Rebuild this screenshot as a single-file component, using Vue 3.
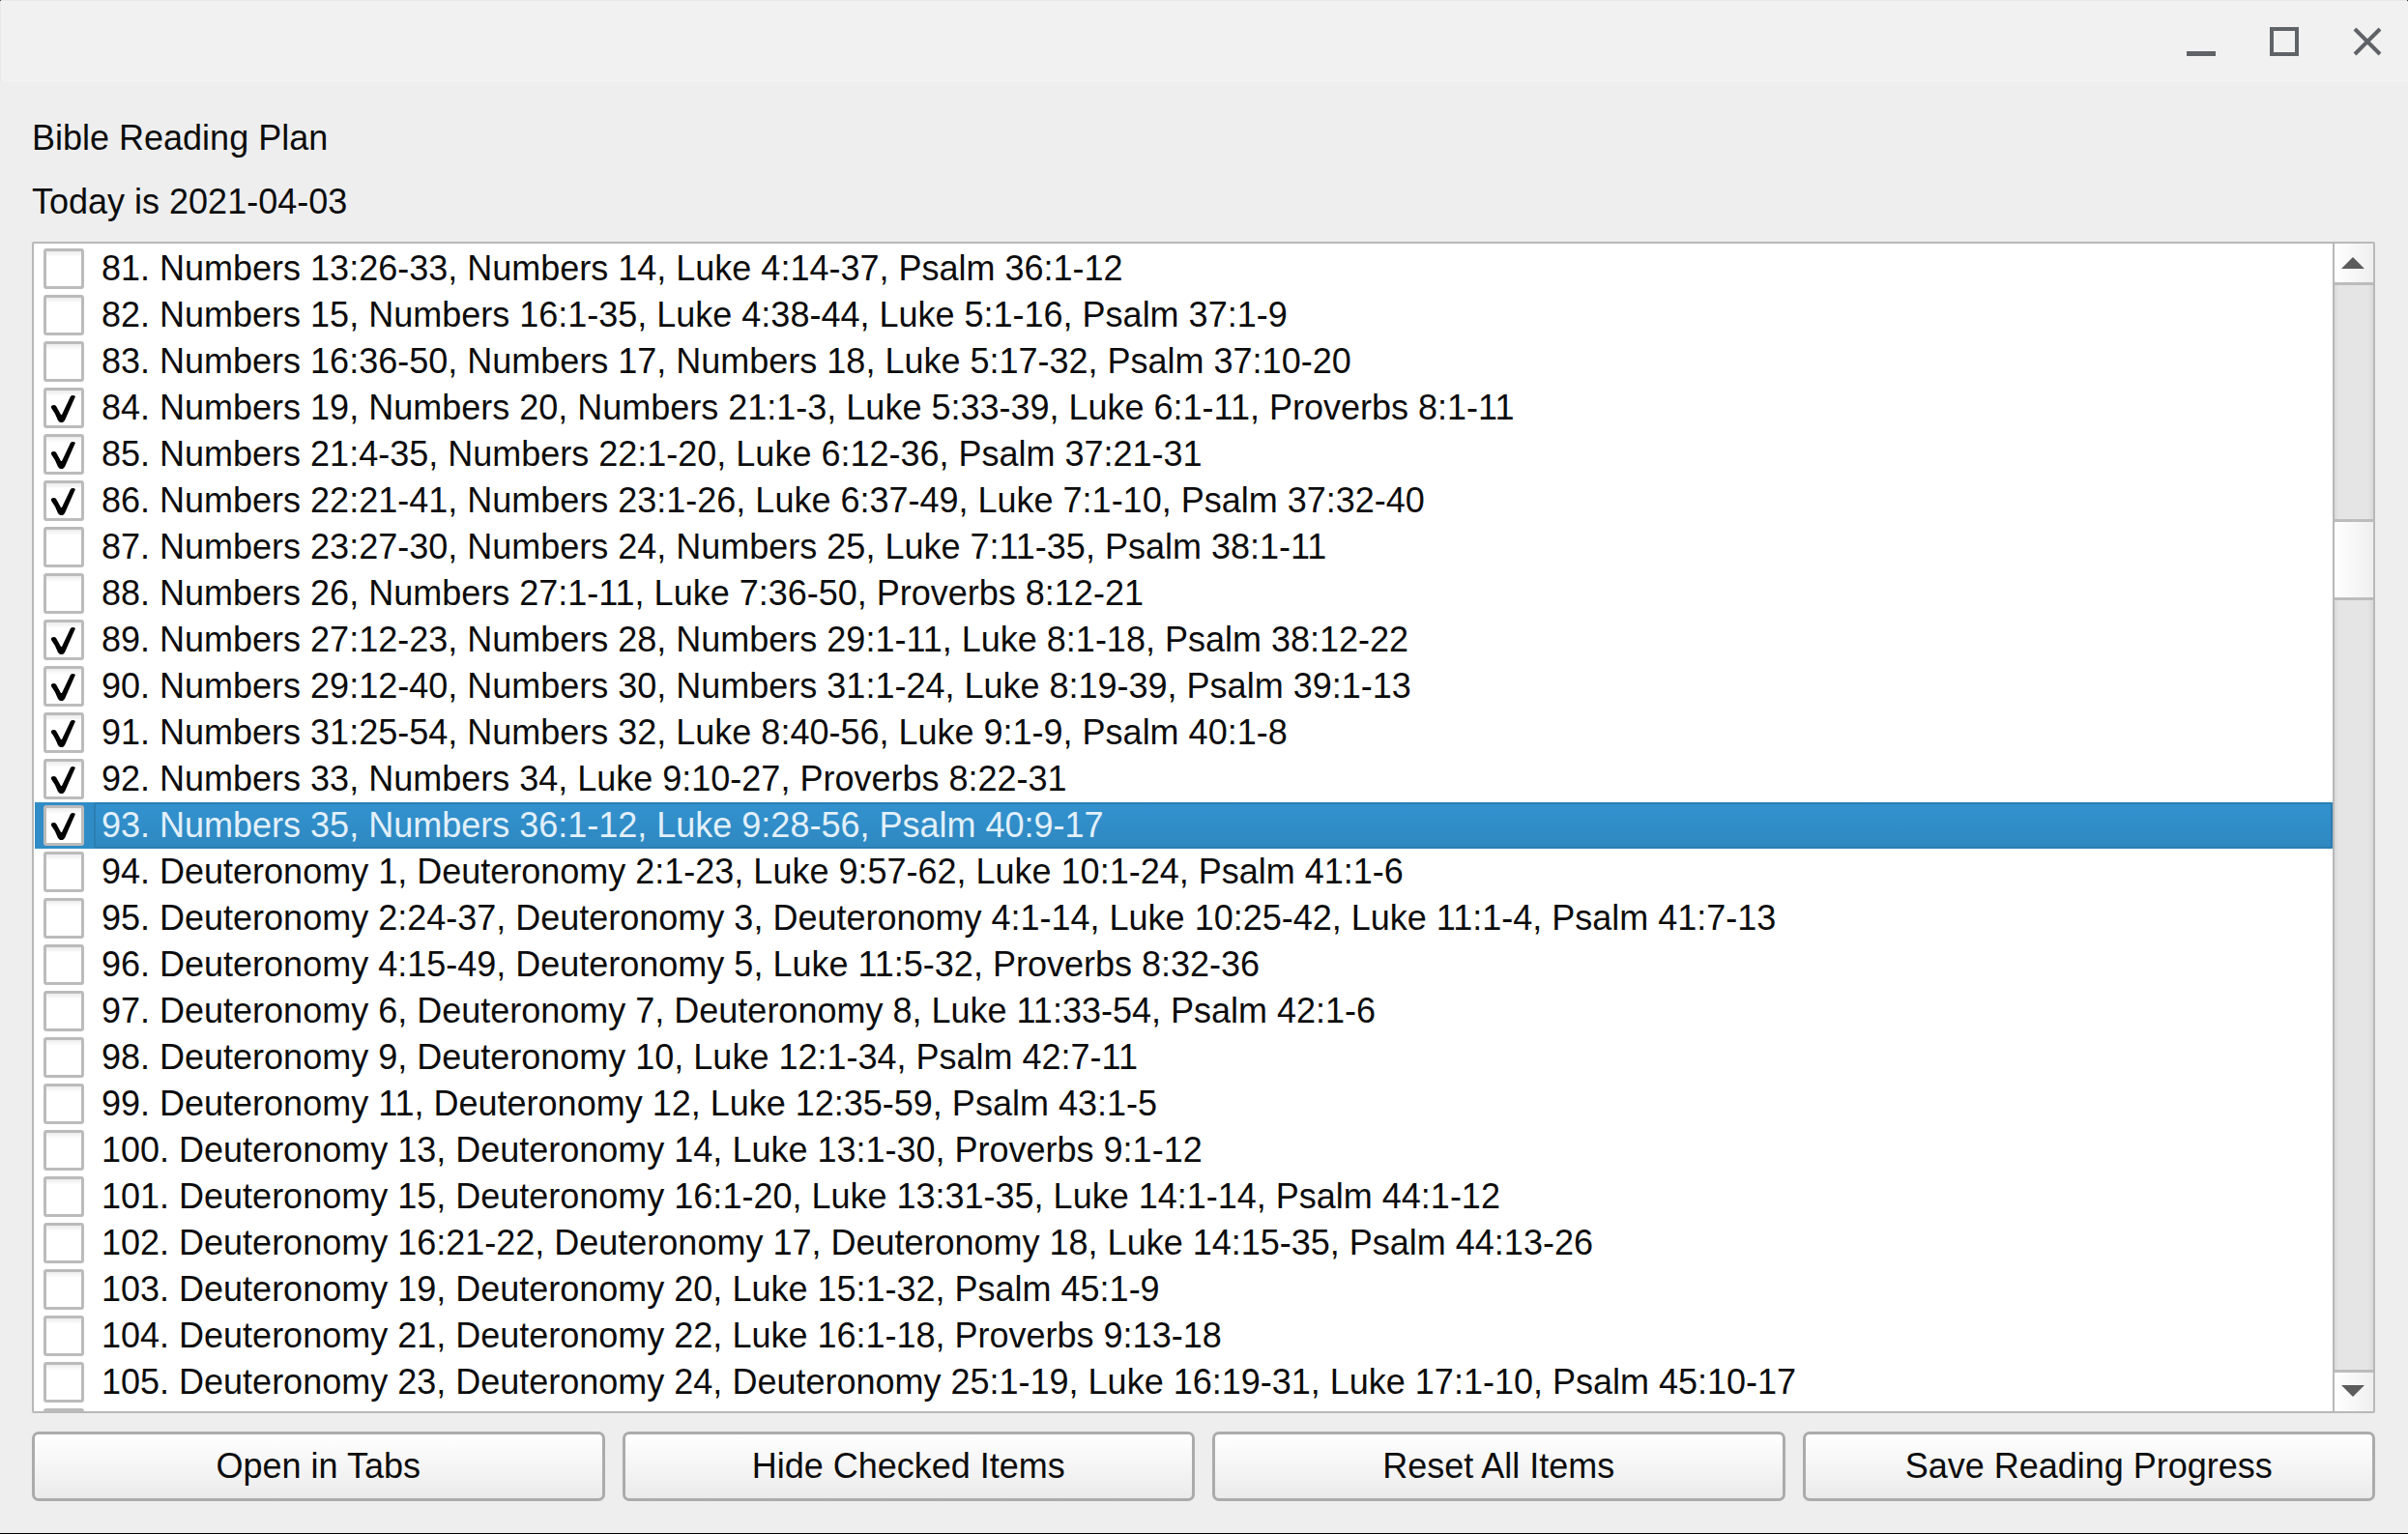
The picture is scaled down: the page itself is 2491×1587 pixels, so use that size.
<script setup>
import { ref } from 'vue'

const today = '2021-04-03'
const selected = ref(93)

const items = ref([
  { id: 81, done: false, text: 'Numbers 13:26-33, Numbers 14, Luke 4:14-37, Psalm 36:1-12' },
  { id: 82, done: false, text: 'Numbers 15, Numbers 16:1-35, Luke 4:38-44, Luke 5:1-16, Psalm 37:1-9' },
  { id: 83, done: false, text: 'Numbers 16:36-50, Numbers 17, Numbers 18, Luke 5:17-32, Psalm 37:10-20' },
  { id: 84, done: true, text: 'Numbers 19, Numbers 20, Numbers 21:1-3, Luke 5:33-39, Luke 6:1-11, Proverbs 8:1-11' },
  { id: 85, done: true, text: 'Numbers 21:4-35, Numbers 22:1-20, Luke 6:12-36, Psalm 37:21-31' },
  { id: 86, done: true, text: 'Numbers 22:21-41, Numbers 23:1-26, Luke 6:37-49, Luke 7:1-10, Psalm 37:32-40' },
  { id: 87, done: false, text: 'Numbers 23:27-30, Numbers 24, Numbers 25, Luke 7:11-35, Psalm 38:1-11' },
  { id: 88, done: false, text: 'Numbers 26, Numbers 27:1-11, Luke 7:36-50, Proverbs 8:12-21' },
  { id: 89, done: true, text: 'Numbers 27:12-23, Numbers 28, Numbers 29:1-11, Luke 8:1-18, Psalm 38:12-22' },
  { id: 90, done: true, text: 'Numbers 29:12-40, Numbers 30, Numbers 31:1-24, Luke 8:19-39, Psalm 39:1-13' },
  { id: 91, done: true, text: 'Numbers 31:25-54, Numbers 32, Luke 8:40-56, Luke 9:1-9, Psalm 40:1-8' },
  { id: 92, done: true, text: 'Numbers 33, Numbers 34, Luke 9:10-27, Proverbs 8:22-31' },
  { id: 93, done: true, text: 'Numbers 35, Numbers 36:1-12, Luke 9:28-56, Psalm 40:9-17' },
  { id: 94, done: false, text: 'Deuteronomy 1, Deuteronomy 2:1-23, Luke 9:57-62, Luke 10:1-24, Psalm 41:1-6' },
  { id: 95, done: false, text: 'Deuteronomy 2:24-37, Deuteronomy 3, Deuteronomy 4:1-14, Luke 10:25-42, Luke 11:1-4, Psalm 41:7-13' },
  { id: 96, done: false, text: 'Deuteronomy 4:15-49, Deuteronomy 5, Luke 11:5-32, Proverbs 8:32-36' },
  { id: 97, done: false, text: 'Deuteronomy 6, Deuteronomy 7, Deuteronomy 8, Luke 11:33-54, Psalm 42:1-6' },
  { id: 98, done: false, text: 'Deuteronomy 9, Deuteronomy 10, Luke 12:1-34, Psalm 42:7-11' },
  { id: 99, done: false, text: 'Deuteronomy 11, Deuteronomy 12, Luke 12:35-59, Psalm 43:1-5' },
  { id: 100, done: false, text: 'Deuteronomy 13, Deuteronomy 14, Luke 13:1-30, Proverbs 9:1-12' },
  { id: 101, done: false, text: 'Deuteronomy 15, Deuteronomy 16:1-20, Luke 13:31-35, Luke 14:1-14, Psalm 44:1-12' },
  { id: 102, done: false, text: 'Deuteronomy 16:21-22, Deuteronomy 17, Deuteronomy 18, Luke 14:15-35, Psalm 44:13-26' },
  { id: 103, done: false, text: 'Deuteronomy 19, Deuteronomy 20, Luke 15:1-32, Psalm 45:1-9' },
  { id: 104, done: false, text: 'Deuteronomy 21, Deuteronomy 22, Luke 16:1-18, Proverbs 9:13-18' },
  { id: 105, done: false, text: 'Deuteronomy 23, Deuteronomy 24, Deuteronomy 25:1-19, Luke 16:19-31, Luke 17:1-10, Psalm 45:10-17' },
  { id: 106, done: false, text: '' },
])

const actions = ['Open in Tabs', 'Hide Checked Items', 'Reset All Items', 'Save Reading Progress']
</script>

<template>
  <div class="window">
    <header class="titlebar">
      <button type="button" class="control" aria-label="Minimize">
        <svg width="30" height="30" viewBox="0 0 30 30"><path d="M0 27.5H30" stroke-width="5" /></svg>
      </button>
      <button type="button" class="control" aria-label="Maximize">
        <svg width="30" height="30" viewBox="0 0 30 30"><rect x="2" y="2" width="26" height="26" stroke-width="4" /></svg>
      </button>
      <button type="button" class="control" aria-label="Close">
        <svg width="30" height="30" viewBox="0 0 30 30"><path d="M2 2L28 28M28 2L2 28" stroke-width="4" /></svg>
      </button>
    </header>

    <main class="content">
      <h1 class="line">Bible Reading Plan</h1>
      <p class="line">Today is {{ today }}</p>

      <div class="list">
        <ul class="rows">
          <li v-for="item in items" :key="item.id" class="row" :class="{ selected: item.id === selected }" @click="selected = item.id">
            <span class="check">
              <input :id="`item-${item.id}`" v-model="item.done" type="checkbox" class="box" />
              <svg v-if="item.done" class="tick" width="42" height="42" viewBox="0 0 42 42">
                <path d="M8 19Q11 17 13 19L18 28H19L28 9Q30 7 33 9L22 34L20 36H17L15 34Q12 26 8 21Z" />
              </svg>
            </span>
            <label :for="`item-${item.id}`" class="text"><template v-if="item.text">{{ item.id }}. {{ item.text }}</template></label>
          </li>
        </ul>
        <div class="scrollbar">
          <button type="button" class="step up" aria-label="Scroll up">
            <svg width="24" height="12" viewBox="0 0 24 12"><path d="M0 12L12 0L24 12Z" /></svg>
          </button>
          <div class="track"><div class="thumb"></div></div>
          <button type="button" class="step down" aria-label="Scroll down">
            <svg width="24" height="12" viewBox="0 0 24 12"><path d="M0 0L12 12L24 0Z" /></svg>
          </button>
        </div>
      </div>

      <div class="actions">
        <button v-for="action in actions" :key="action" type="button" class="action">{{ action }}</button>
      </div>
    </main>
  </div>
</template>

<style>
body {
  background: #000;
}
</style>

<style scoped>
.window {
  box-sizing: border-box;
  height: 100vh;
  display: flex;
  flex-direction: column;
  overflow: hidden;
  border-bottom: 1px solid #000;
  border-radius: 3px 3px 0 0;
  background: #eee;
  color: #0c0c0c;
  font: 36px/48px "Liberation Sans", Arial, sans-serif;
}

.titlebar {
  box-sizing: border-box;
  height: 85px;
  flex: none;
  display: flex;
  justify-content: flex-end;
  gap: 1px;
  border-top: 1px solid #e9e9e9;
  border-left: 1px solid #e9e9e9;
  background: #f1f1f1;
}

.control {
  width: 85px;
  padding: 0;
  border: 0;
  background: none;
  display: flex;
  align-items: center;
  justify-content: center;
}

.control svg {
  fill: none;
  stroke: #5f6368;
}

.content {
  flex: 1;
  min-height: 0;
  display: flex;
  flex-direction: column;
  padding: 33px 34px 33px 33px;
}

.line {
  flex: none;
  margin: 0 0 16px;
  font-size: 36px;
  font-weight: 400;
  line-height: 50px;
}

.list {
  flex: 1;
  min-height: 0;
  display: flex;
  overflow: hidden;
  border: 2px solid #b8b8b8;
  border-radius: 2px;
  background: #fff;
}

.rows {
  flex: 1;
  min-width: 0;
  overflow: hidden;
  margin: 0;
  padding: 2px 0 0 1px;
  list-style: none;
}

.row {
  height: 48px;
  display: flex;
  align-items: center;
  padding-left: 9px;
}

.check {
  display: grid;
  margin-right: 10px;
}

.box {
  grid-area: 1 / 1;
  box-sizing: border-box;
  width: 42px;
  height: 42px;
  margin: 0;
  appearance: none;
  border: 3px solid #bbb;
  border-radius: 3px;
  background: linear-gradient(#ececec, #fff 6px);
}

.tick {
  grid-area: 1 / 1;
  pointer-events: none;
}

.text {
  box-sizing: border-box;
  flex: 1;
  height: 48px;
  padding-left: 8px;
  line-height: 48px;
  white-space: nowrap;
}

.selected {
  background: #308cc6;
}

.selected .text {
  padding-left: 6px;
  line-height: 44px;
  border: 2px solid #2b7eb2;
  border-radius: 3px;
  background: linear-gradient(#3292cf, #2f88c0);
  color: #e2f0fa;
}

.scrollbar {
  width: 42px;
  flex: none;
  box-sizing: border-box;
  display: flex;
  flex-direction: column;
  border-left: 2px solid #b8b8b8;
}

.step {
  height: 43px;
  flex: none;
  padding: 0 2px 0 0;
  border: 0 solid #bcbcbc;
  background: linear-gradient(90deg, #fff, #efefef);
  display: flex;
  align-items: center;
  justify-content: center;
}

.step svg {
  fill: #5c5c5c;
}

.up {
  border-bottom-width: 3px;
}

.down {
  padding-bottom: 3px;
  border-top-width: 3px;
}

.track {
  flex: 1;
  padding-top: 242px;
  background: linear-gradient(90deg, #d8d8d8, #e5e5e5 4px, #e5e5e5 34px, #dadada);
}

.thumb {
  box-sizing: border-box;
  height: 84px;
  border: solid #bcbcbc;
  border-width: 3px 0;
  background: linear-gradient(90deg, #fff, #efefef);
}

.actions {
  flex: none;
  display: grid;
  grid-template-columns: repeat(4, 1fr);
  gap: 18px;
  margin-top: 19px;
}

.action {
  height: 72px;
  padding: 0;
  border: 3px solid #ababab;
  border-radius: 7px;
  background: linear-gradient(#fff, #ebebeb);
  color: inherit;
  font: inherit;
}
</style>
